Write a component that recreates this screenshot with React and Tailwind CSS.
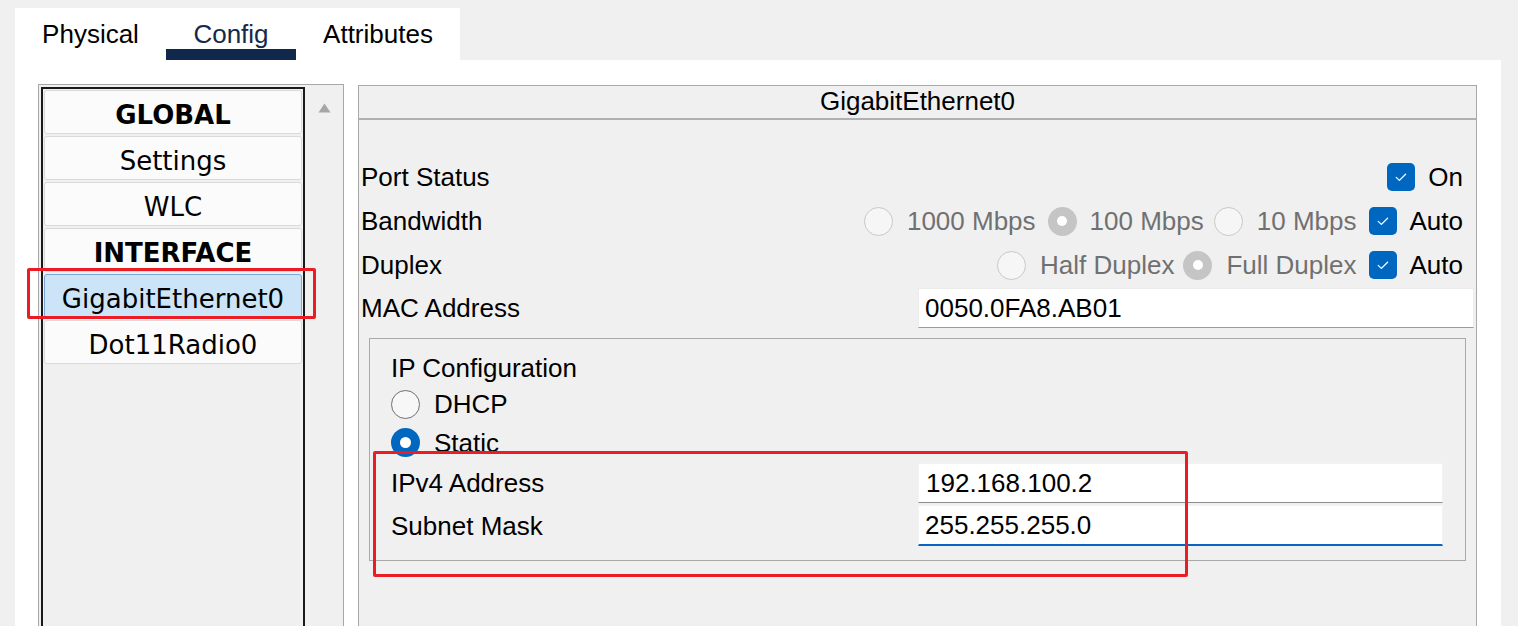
import React from "react";

const Check = () => (
  <div className="w-[28px] h-[28px] shrink-0 rounded-[5px] bg-[#0067c0] flex items-center justify-center">
    <svg width="16" height="16" viewBox="0 0 16 16">
      <path d="M3.2 8.4 L6.4 11.4 L12.6 5.2" fill="none" stroke="white" strokeWidth="1.3" strokeLinecap="round" strokeLinejoin="round" />
    </svg>
  </div>
);

const RadioOff = () => (
  <div className="w-[29px] h-[29px] shrink-0 rounded-full border border-[#c8c8c8] bg-[#f6f6f6]" />
);

const RadioOnGray = () => (
  <div className="w-[29px] h-[29px] shrink-0 rounded-full bg-[#c5c5c5] flex items-center justify-center">
    <div className="w-[10px] h-[10px] rounded-full bg-white" />
  </div>
);

const Tab = ({ w, active, children }) => (
  <div className={`flex flex-col h-full ${w}`}>
    <div className={`pt-[11px] h-[41px] text-center text-[26px] leading-[30px] ${active ? "text-[#15294a]" : "text-black"}`}>
      {children}
    </div>
    <div className={`h-[11px] ${active ? "bg-[#10284b]" : ""}`} />
  </div>
);

const ListItem = ({ children, bold, selected }) => (
  <div
    className={`h-[44px] shrink-0 rounded-[3px] border flex items-center justify-center pt-[5px] text-[26px] leading-none text-black ${
      bold ? "font-bold" : ""
    } ${selected ? "bg-[#cce4f7] border-[#7aa7d6]" : "bg-[#fbfbfb] border-[#dadada]"}`}
  >
    {children}
  </div>
);

export default function App() {
  return (
    <div className="relative w-[1518px] h-[626px] overflow-hidden bg-[#f0f0f0] pt-[8px] pl-[15px] font-['Liberation_Sans',Arial,sans-serif]">
      {/* Tabs */}
      <div className="flex w-[445px] h-[52px] bg-white">
        <Tab w="w-[151px]">Physical</Tab>
        <Tab w="w-[130px]" active>Config</Tab>
        <Tab w="w-[164px]">Attributes</Tab>
      </div>

      {/* Main */}
      <div className="flex w-[1486px] h-[566px] bg-white pl-[23px] pt-[24px] items-start">
        {/* Left list box */}
        <div className="flex w-[306px] h-[560px] border border-[#a8a8a8] bg-[#f0f0f0] shrink-0">
          <div className="ml-[2px] mt-[2px] w-[264px] h-[600px] border-2 border-[#1a1a1a] bg-[#f0f0f0] pt-[1px] px-[1px] flex flex-col gap-[2px] font-['DejaVu_Sans',Verdana,sans-serif]">
            <ListItem bold>GLOBAL</ListItem>
            <ListItem>Settings</ListItem>
            <ListItem>WLC</ListItem>
            <ListItem bold>INTERFACE</ListItem>
            <ListItem selected>GigabitEthernet0</ListItem>
            <ListItem>Dot11Radio0</ListItem>
          </div>
          <div className="flex-1 flex justify-center pt-[18px]">
            <svg width="13" height="10" viewBox="0 0 13 10">
              <path d="M6.5 0.5 L12.5 9.5 L0.5 9.5 Z" fill="#a6a6a6" />
            </svg>
          </div>
        </div>

        {/* Right panel */}
        <div className="ml-[14px] mt-[1px] w-[1119px] h-[600px] border border-[#a8a8a8] bg-[#f0f0f0] shrink-0 flex flex-col">
          <div className="h-[34px] border-b-2 border-[#b0b0b0] flex items-center justify-center text-[26px] leading-none text-black pb-[2px]">
            GigabitEthernet0
          </div>
          <div className="pt-[35px] flex flex-col text-[26px] leading-[30px] text-black">
            {/* Port status */}
            <div className="h-[44px] flex items-center justify-between pl-[2px] pr-[13px]">
              <span>Port Status</span>
              <div className="flex items-center">
                <Check />
                <span className="ml-[13px]">On</span>
              </div>
            </div>
            {/* Bandwidth */}
            <div className="h-[44px] flex items-center justify-between pl-[2px] pr-[13px]">
              <span>Bandwidth</span>
              <div className="flex items-center text-[#707070]">
                <RadioOff />
                <span className="ml-[14px]">1000 Mbps</span>
                <div className="ml-[12px]"><RadioOnGray /></div>
                <span className="ml-[13px]">100 Mbps</span>
                <div className="ml-[10px]"><RadioOff /></div>
                <span className="ml-[14px]">10 Mbps</span>
                <div className="ml-[12px]"><Check /></div>
                <span className="ml-[13px] text-black">Auto</span>
              </div>
            </div>
            {/* Duplex */}
            <div className="h-[44px] flex items-center justify-between pl-[2px] pr-[13px]">
              <span>Duplex</span>
              <div className="flex items-center text-[#707070]">
                <RadioOff />
                <span className="ml-[14px]">Half Duplex</span>
                <div className="ml-[9px]"><RadioOnGray /></div>
                <span className="ml-[14px]">Full Duplex</span>
                <div className="ml-[12px]"><Check /></div>
                <span className="ml-[13px] text-black">Auto</span>
              </div>
            </div>
            {/* MAC */}
            <div className="mt-[1px] h-[40px] flex items-stretch pl-[2px] pr-[2px]">
              <div className="w-[557px] flex items-center">MAC Address</div>
              <div className="flex-1 bg-white border border-[#ececec] border-b-[#9a9a9a] flex items-center pl-[6px]">
                0050.0FA8.AB01
              </div>
            </div>

            {/* IP configuration group */}
            <div className="mt-[10px] mx-[10px] border border-[#a9a9a9] pt-[11px] pb-[14px] pl-[21px] pr-[22px] flex flex-col">
              <div className="h-[36px] flex items-center">IP Configuration</div>
              <div className="h-[36px] flex items-center">
                <div className="w-[29px] h-[29px] rounded-full border-[1.5px] border-[#6f6f6f] bg-[#f7f7f7]" />
                <span className="ml-[14px]">DHCP</span>
              </div>
              <div className="h-[41px] flex items-center">
                <div className="w-[29px] h-[29px] rounded-full bg-[#0067c0] flex items-center justify-center">
                  <div className="w-[11px] h-[11px] rounded-full bg-white" />
                </div>
                <span className="ml-[14px]">Static</span>
              </div>
              <div className="h-[40px] flex items-stretch">
                <div className="w-[527px] flex items-center">IPv4 Address</div>
                <div className="flex-1 bg-white border border-[#f2f2f2] border-b-[#8c8c8c] flex items-center pl-[7px]">
                  192.168.100.2
                </div>
              </div>
              <div className="mt-[2px] h-[41px] flex items-stretch">
                <div className="w-[527px] flex items-center">Subnet Mask</div>
                <div className="flex-1 bg-white border border-[#f2f2f2] border-b-2 border-b-[#0a64c6] flex items-center pl-[6px]">
                  255.255.255.0
                </div>
              </div>
            </div>
          </div>
        </div>
      </div>

      {/* Red annotation boxes */}
      <div className="absolute left-[27px] top-[268px] w-[289px] h-[51px] border-[3px] border-[#ec1c24] rounded-[2px]" />
      <div className="absolute left-[373px] top-[451px] w-[815px] h-[126px] border-[3px] border-[#ec1c24] rounded-[2px]" />
    </div>
  );
}
